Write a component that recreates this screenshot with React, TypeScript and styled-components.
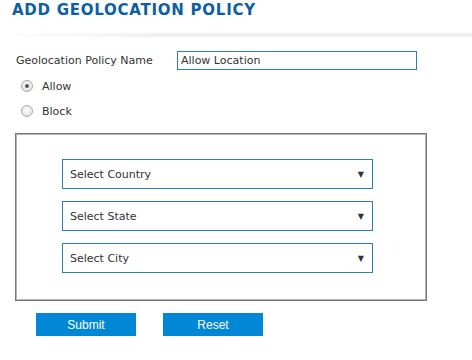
import React, { useState } from 'react';
import styled, { createGlobalStyle } from 'styled-components';

const GlobalStyle = createGlobalStyle`
  html, body {
    margin: 0;
    padding: 0;
    background: #ffffff;
  }
  body {
    font-family: 'DejaVu Sans', Verdana, sans-serif;
    color: #333333;
  }
`;

const Page = styled.div`
  width: 472px;
  height: 360px;
  overflow: hidden;
`;

const Title = styled.h1`
  margin: 0;
  padding: 1px 0 0 12px;
  font-family: 'DejaVu Sans', Verdana, sans-serif;
  font-weight: bold;
  font-size: 15px;
  line-height: 18px;
  letter-spacing: 0.75px;
  color: #0d5ea3;
`;

const Divider = styled.div`
  height: 6px;
  margin-top: 13px;
  background: linear-gradient(to bottom, rgba(0, 0, 0, 0), rgba(0, 0, 0, 0.09) 50%, rgba(0, 0, 0, 0));
  -webkit-mask-image: linear-gradient(to right, transparent 0, #000 40%, #000 100%);
  mask-image: linear-gradient(to right, transparent 0, #000 40%, #000 100%);
`;

const Form = styled.form`
  display: flex;
  flex-direction: column;
  padding: 13px 0 0 16px;
`;

const FieldRow = styled.div`
  display: flex;
  align-items: center;
`;

const Label = styled.label`
  width: 161px;
  font-size: 11px;
  color: #333;
`;

const TextInput = styled.input`
  box-sizing: border-box;
  width: 240px;
  height: 19px;
  margin: 0;
  padding: 0 3px;
  border: 1px solid #2b80b1;
  font-family: 'DejaVu Sans', Verdana, sans-serif;
  font-size: 11px;
  color: #333;
  outline: none;
`;

const RadioGroup = styled.div`
  display: flex;
  flex-direction: column;
  gap: 11px;
  margin: 9px 0 0 5px;
`;

const RadioLabel = styled.label`
  display: flex;
  align-items: center;
  gap: 9px;
  font-size: 11px;
  color: #333;
  height: 14px;
`;

const RadioDot = styled.span<{ $checked: boolean }>`
  box-sizing: border-box;
  width: 12px;
  height: 12px;
  border-radius: 50%;
  border: 1px solid #a9a9a9;
  background: radial-gradient(circle at 50% 40%, #fdfdfd, #dcdcdc);
  display: flex;
  align-items: center;
  justify-content: center;

  &::after {
    content: '';
    width: 4px;
    height: 4px;
    border-radius: 50%;
    background: ${({ $checked }) => ($checked ? '#555' : 'transparent')};
  }
`;

const LocationBox = styled.div`
  box-sizing: border-box;
  width: 412px;
  height: 168px;
  margin: 15px 0 0 -1px;
  border: 1px solid #777;
  box-shadow: inset 0 0 0 1px #b4b4b4;
  display: flex;
  flex-direction: column;
  gap: 12px;
  padding: 25px 0 0 46px;
`;

const SelectBox = styled.div`
  box-sizing: border-box;
  width: 311px;
  height: 30px;
  border: 1px solid #2b80b1;
  display: flex;
  align-items: center;
  justify-content: space-between;
  padding: 0 8px 0 7px;
  font-size: 11px;
  color: #333;
`;

const Caret = styled.span`
  font-size: 8px;
  color: #333;
`;

const Actions = styled.div`
  display: flex;
  gap: 27px;
  margin: 12px 0 0 20px;
`;

const Button = styled.button`
  width: 100px;
  height: 23px;
  border: none;
  background: #0088d6;
  color: #ffffff;
  font-family: 'Liberation Sans', Arial, sans-serif;
  font-size: 12px;
  padding: 0;
  cursor: pointer;
`;

const selects = ['Select Country', 'Select State', 'Select City'];

export default function App() {
  const [name, setName] = useState('Allow Location');
  const [mode, setMode] = useState('allow');

  return (
    <Page>
      <GlobalStyle />
      <Title>ADD GEOLOCATION POLICY</Title>
      <Divider />
      <Form onSubmit={(e) => e.preventDefault()}>
        <FieldRow>
          <Label>Geolocation Policy Name</Label>
          <TextInput value={name} onChange={(e) => setName(e.target.value)} />
        </FieldRow>
        <RadioGroup>
          <RadioLabel onClick={() => setMode('allow')}>
            <RadioDot $checked={mode === 'allow'} />
            Allow
          </RadioLabel>
          <RadioLabel onClick={() => setMode('block')}>
            <RadioDot $checked={mode === 'block'} />
            Block
          </RadioLabel>
        </RadioGroup>
        <LocationBox>
          {selects.map((s) => (
            <SelectBox key={s}>
              <span>{s}</span>
              <Caret>▼</Caret>
            </SelectBox>
          ))}
        </LocationBox>
        <Actions>
          <Button type="submit">Submit</Button>
          <Button type="button">Reset</Button>
        </Actions>
      </Form>
    </Page>
  );
}
